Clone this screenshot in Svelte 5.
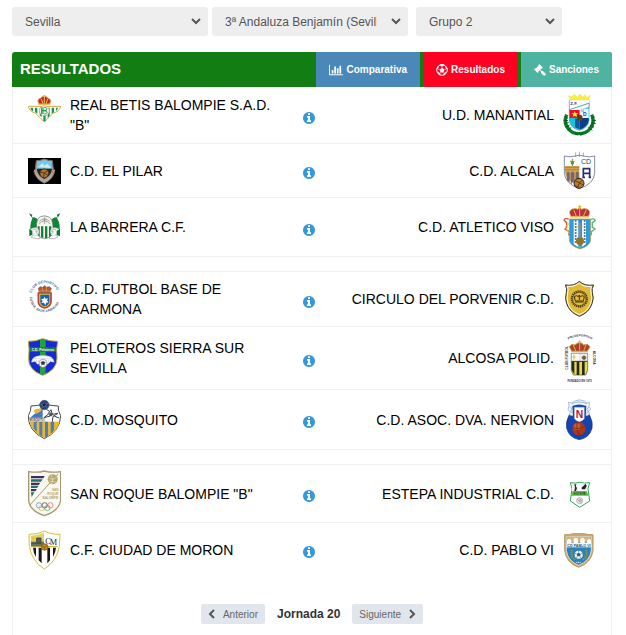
<script>
  const filters = [
    { id: 'provincia', label: 'Provincia', value: 'Sevilla', width: 196 },
    { id: 'categoria', label: 'Categoría', value: '3ª Andaluza Benjamín (Sevilla)', width: 196 },
    { id: 'grupo', label: 'Grupo', value: 'Grupo 2', width: 146 },
  ];

  const groups = [
    [
      { home: 'REAL BETIS BALOMPIE S.A.D. "B"', away: 'U.D. MANANTIAL', homeLogo: betis, awayLogo: manantial },
      { home: 'C.D. EL PILAR', away: 'C.D. ALCALA', homeLogo: pilar, awayLogo: alcala },
      { home: 'LA BARRERA C.F.', away: 'C.D. ATLETICO VISO', homeLogo: barrera, awayLogo: viso },
    ],
    [
      { home: 'C.D. FUTBOL BASE DE CARMONA', away: 'CIRCULO DEL PORVENIR C.D.', homeLogo: carmona, awayLogo: porvenir },
      { home: 'PELOTEROS SIERRA SUR SEVILLA', away: 'ALCOSA POLID.', homeLogo: peloteros, awayLogo: alcosa },
      { home: 'C.D. MOSQUITO', away: 'C.D. ASOC. DVA. NERVION', homeLogo: mosquito, awayLogo: nervion },
    ],
    [
      { home: 'SAN ROQUE BALOMPIE "B"', away: 'ESTEPA INDUSTRIAL C.D.', homeLogo: sanroque, awayLogo: estepa },
      { home: 'C.F. CIUDAD DE MORON', away: 'C.D. PABLO VI', homeLogo: moron, awayLogo: pablo },
    ],
  ];
</script>

{#snippet betis()}
  <svg class="logo" viewBox="54 18 99 138" aria-hidden="true">
    <path d="M55 61h97q-4 16-22 20l-27 27-27-27q-18-4-21-20z" fill="#fff" stroke="#d8a548" stroke-width="3" />
    <path d="M62 65h7v12l-7-7zM75 65h7v18l-7-5zM89 65h6v29l-6-6zM100 62h7v42l-4 3-3-3zM113 65h6v25l-6 6zM125 65h7v14l-7 4zM138 65h7l-7 11z" fill="#189a50" />
    <circle cx="103" cy="74" r="15" fill="#eef3df" stroke="#c7a050" stroke-width="2" />
    <path d="M95 64v20m4-20v20m-4-10h15m-7-10c10 0 9 9 0 10c11 0 10 10 0 10" fill="none" stroke="#16954b" stroke-width="3" />
    <path d="M87 54q-8-14 4-17 4-6 12-6 7 0 11 6 13 3 5 17z" fill="#c32431" stroke="#d9a642" stroke-width="3" />
    <path d="M85 55h36M94 39l5 14m14-14-5 14M103 28v24M99 29h8" stroke="#e7bc52" stroke-width="3" />
  </svg>
{/snippet}

{#snippet manantial()}
  <svg class="logo" viewBox="189 18 99 138" aria-hidden="true">
    <path d="M200 86q-11 25 6 43 10 14 31 14 21 0 33-15 16-17 5-42" fill="none" stroke="#087b27" stroke-width="10" />
    <path d="M194 92l10 5m-13 6 13 1m-12 8 14-2m-9 14 12-7m-6 16 11-9M284 92l-10 5m14 6-13 1m12 9-14-3m9 14-12-7m7 16-12-9M226 139l6 9m16-10-6 11" stroke="#075d1e" stroke-width="3" />
    <path d="M208 43h59v60q-3 23-29 30-27-7-30-30z" fill="#1adbea" stroke="#607e9d" stroke-width="2" />
    <path d="M209 43l58-4v11l-58 20z" fill="#fff" /><path d="M209 71l58-19v12l-27 9-30 1z" fill="#f7f7ff" stroke="#333" />
    <path d="M209 72h30v24h-30z" fill="#e51319" /><path d="M239 68h27v28h-27z" fill="#e8f6ff" />
    <path d="M239 96h27v8q-4 18-27 27z" fill="#0b3d89" /><path d="M209 96h30v35q-27-8-30-27z" fill="#10c6dc" /><path d="M225 98h14v32l-14-6z" fill="#1358a4" />
    <path d="M224 76l3 6h7l-5 4 2 7-7-4-6 4 2-7-5-4h7z" fill="#ffec3b" />
    <circle cx="239" cy="95" r="9" fill="#6b4422" /><path d="M233 91l12 8m-8-12v16" stroke="#24170d" />
    <path d="M205 29l7 13h54l5-15-10 8-6-9-7 8-8-10-8 10-9-9-7 8z" fill="#ffef32" stroke="#ebc831" />
    <text x="211" y="58" class="blue heavy" font-size="13">Z.F.</text><text x="242" y="79" class="cyan heavy" font-size="13">U</text><text x="249" y="90" class="blue heavy" font-size="15">D</text>
  </svg>
{/snippet}

{#snippet pilar()}
  <svg class="logo" viewBox="54 189 99 129" aria-hidden="true">
    <path d="M54 216h99v78H54z" fill="#030303" />
    <path d="M79 224q12 0 24-5 12 5 24 5l3 25q0 30-27 43-27-13-27-43z" fill="#a4a19d" stroke="#776e6b" stroke-width="3" />
    <path d="M82 226q11 0 21-4 11 4 21 4v22H80z" fill="#6ec9ee" /><path d="M84 244l14-13 5 8 10-6 11 13z" fill="#d6e8e4" />
    <path d="M80 248h46q-2 22-23 31-20-9-23-31z" fill="#27231d" />
    <circle cx="103" cy="262" r="13" fill="#b0742d" stroke="#3a291b" stroke-width="2" /><path d="M91 258l12 3 10-7m-10 7-3 13m3-13 11 7" fill="none" stroke="#35230f" stroke-width="2" />
    <path d="M74 251q2 25 29 37 27-11 30-37" fill="none" stroke="#b2abb1" stroke-width="5" />
    <path d="M71 255q8 29 32 35 24-7 31-35" fill="none" stroke="#816a28" stroke-width="2" />
  </svg>
{/snippet}

{#snippet alcala()}
  <svg class="logo" viewBox="189 189 99 129" aria-hidden="true">
    <path d="M193 210q18 5 33 0 12-5 24 0 18 5 34 0v52q-2 31-46 46-42-15-45-46z" fill="#fff" stroke="#425680" stroke-width="2" />
    <path d="M227 199v14m11-16v16m12-13v12" stroke="#74819c" stroke-width="2" />
    <path d="M194 240h44v58q-42-12-44-46z" fill="#d1a451" />
    <path d="M194 244h44M194 251h44" stroke="#977336" stroke-width="2" />
    <path d="M201 283v-22q4-8 7 0v28m5 5v-33q5-8 9 0v23m6 0v-23q4-8 8 0v24" fill="#6c6395" stroke="#8c6d41" stroke-width="2" />
    <path d="M217 218v22m-7-14h14m-10 6h7" stroke="#9e8c2d" stroke-width="3" /><circle cx="217" cy="231" r="5" fill="#4c9550" />
    <text x="243" y="234" class="blue" font-size="21">CD</text>
    <path d="M250 274v-26h19v26m-19-12h19m-22 12h8m11 0h7" fill="none" stroke="#292f68" stroke-width="5" />
    <circle cx="237" cy="292" r="15" fill="#b47d2a" stroke="#30251b" stroke-width="3" /><path d="M225 284l13 6 11-8m-11 8-4 14m4-14 13 8M225 299l10 4" fill="none" stroke="#3b2715" stroke-width="2" />
  </svg>
{/snippet}

{#snippet barrera()}
  <svg class="logo" viewBox="54 9 99 144" aria-hidden="true">
    <path d="M60 44l32 38M148 44l-31 38" stroke="#777" stroke-width="2" />
    <path d="M57 40l10 4-2 8zM151 40l-11 4 4 8z" fill="#14722d" />
    <path d="M68 52q14 0 21 16l2 21q-14-11-29-2l2 18q-6-20-1-38zM140 52q-14 0-20 16l-1 21q13-11 28-2l-1 18q6-20 1-38z" fill="#0b8737" />
    <path d="M79 84q0-28 12-34 13-6 26 1 11 6 12 31v15q-4 16-25 19-21-3-25-19z" fill="#f3f5ef" stroke="#6d6d6d" stroke-width="2" />
    <path d="M86 72q17-18 35 0M88 64q15-15 31 0M104 50v22m-6-12h12" stroke="#888" fill="none" stroke-width="2" />
    <path d="M83 79h6v31l-6-5zM93 79h7v35l-7-2zM105 79h7v36h-7zM117 79h7v28l-7 5z" fill="#16803b" />
    <circle cx="75" cy="95" r="12" fill="#f5f5f5" stroke="#aaa" /><path d="M68 90q8-7 15 3l-6 2 6 7m-12 2-8 8 16 4h11v-6" fill="none" stroke="#999" stroke-width="2" />
    <circle cx="133" cy="95" r="12" fill="#f5f5f5" stroke="#aaa" /><path d="M139 90q-8-7-15 3l6 2-6 7m13 3 7 7-14 4h-12v-6" fill="none" stroke="#999" stroke-width="2" />
    <path d="M58 86l9 7v11l-9 5zM150 86l-10 7v12l10 4z" fill="#087935" />
  </svg>
{/snippet}

{#snippet viso()}
  <svg class="logo" viewBox="189 9 99 144" aria-hidden="true">
    <path d="M208 57h64v65q-3 16-32 25-29-9-32-25z" fill="#2b9ddd" stroke="#c49a34" stroke-width="2" />
    <path d="M221 61h37v70q-6 7-18 11-14-4-19-11z" fill="#f4f8f8" /><path d="M235 59h11v81h-11z" fill="#2492cf" />
    <path d="M227 61v69m27-69v69" stroke="#384d62" stroke-width="5" stroke-dasharray="4 5" />
    <circle cx="240" cy="123" r="12" fill="#8d7726" /><path d="M240 68v46m-7-34h14" stroke="#8e9491" stroke-width="4" />
    <path d="M206 57q-12-4-14 4l8 7v13l-5 6 12 7v13" fill="none" stroke="#cc5e3c" stroke-width="4" /><path d="M208 70l-12 11 12 19" stroke="#e4bd48" fill="none" stroke-width="3" />
    <path d="M273 58q9-4 13 3l-9 7v14l8 5-11 8v11" fill="none" stroke="#54b67c" stroke-width="4" />
    <path d="M213 49q-10-16 4-22 9-4 17 1l5-8 5 8q9-5 17-1 14 6 4 22z" fill="#be303c" stroke="#d6a839" stroke-width="2" />
    <path d="M210 51h57M221 29l8 20m30-20-9 20M239 16v32m-5-29h10" stroke="#ddb549" stroke-width="3" />
  </svg>
{/snippet}

{#snippet carmona()}
  <svg class="logo" viewBox="54 228 99 132" aria-hidden="true">
    <defs><path id="carmona-top" d="M65 276a41 41 0 0 1 79 0" /><path id="carmona-base" d="M59 288a45 45 0 0 0 91 0" /></defs>
    <text font-size="11" class="teal heavy"><textPath href="#carmona-top">CLUB DEPORTIVO</textPath></text>
    <text font-size="10" class="wine heavy"><textPath href="#carmona-base">FUTBOL BASE CARMONA</textPath></text>
    <path d="M85 276h38v27q-1 14-19 18-18-4-19-18z" fill="#d4c94b" stroke="#c43d36" stroke-width="5" />
    <path d="M91 281h27v21q-1 10-14 14-13-4-13-14z" fill="#1764ac" />
    <path d="M104 287l3 7 7-2-3 7 5 5-7 1-3 8-4-8-8 1 4-6-5-6 8-1z" fill="#fff" />
    <path d="M88 274l-3-12 6-5 7 2 6-5 6 5 8-2 6 5-4 12z" fill="#b5553c" stroke="#7f5938" stroke-width="2" /><path d="M87 270h35M96 259l3 12m10-12v12" stroke="#dfae5b" stroke-width="2" />
  </svg>
{/snippet}

{#snippet porvenir()}
  <svg class="logo" viewBox="189 228 99 132" aria-hidden="true">
    <path d="M238 241q-15 15-42 11 7 12 3 23-5 18 1 33 8 25 38 38 30-12 38-38 7-17 1-33-3-12 4-23-27 4-43-11z" fill="#e3ba35" stroke="#29303a" stroke-width="3" />
    <path d="M238 246q-14 12-36 10 4 10 1 20-4 17 1 31 7 23 34 34 27-11 34-34 6-15 1-31-2-10 1-20-23 3-36-10z" fill="none" stroke="#fff" stroke-width="3" />
    <circle cx="238" cy="294" r="23" fill="none" stroke="#4d401f" stroke-width="6" stroke-dasharray="4 2" />
    <circle cx="238" cy="294" r="20" fill="none" stroke="#4b3b1a" stroke-width="2" />
    <path d="M226 300l-3-13q7-6 12 0l3-5 3 5q6-6 12 0l-3 13z" fill="#e3ba35" stroke="#40320d" stroke-width="3" /><path d="M226 303h25M238 282v15" stroke="#40320d" stroke-width="3" />
  </svg>
{/snippet}

{#snippet peloteros()}
  <svg class="logo" viewBox="54 18 99 156" aria-hidden="true">
    <path d="M55 46q22 0 43-8 22 8 45 8-5 22-2 50 0 36-43 52-44-16-42-52 3-28-1-50z" fill="#162bd4" stroke="#b8ad3b" stroke-width="3" />
    <path d="M90 42l8-3 9 3v101l-9 4-8-4z" fill="#21a43c" />
    <path d="M60 64h78v14H60z" fill="#187a48" /><text x="99" y="75" font-size="10" text-anchor="middle" class="white heavy">C.D. Peloteros</text>
    <path d="M64 109q2-15 15-18 20-6 39 0 13 4 15 18l-12-2-8 8H82l-6-8z" fill="#f5f7fa" stroke="#888" />
    <path d="M68 98h61M72 105h52" stroke="#5c6e91" stroke-dasharray="3 3" />
    <circle cx="99" cy="112" r="12" fill="#fff" stroke="#858585" stroke-width="2" /><path d="M99 105l6 4-2 7h-8l-2-7zM88 112l5-3m12 0 6 3m-7 5 3 5m-12-5-4 5" fill="#333" stroke="#555" />
  </svg>
{/snippet}

{#snippet alcosa()}
  <svg class="logo" viewBox="189 18 99 156" aria-hidden="true">
    <defs><path id="alcosa-top" d="M199 44q40-26 82 0" /></defs>
    <text font-size="9" class="dark heavy"><textPath href="#alcosa-top" startOffset="50%" text-anchor="middle">POLIDEPORTIVO</textPath></text>
    <text transform="translate(203 131) rotate(-90)" font-size="10" class="dark heavy">CLUB FUTBOL</text><text transform="translate(279 74) rotate(90)" font-size="10" class="dark heavy">ALCOSA</text>
    <text x="239" y="167" text-anchor="middle" font-size="8" class="dark heavy">FUNDADO EN 1973</text>
    <path d="M214 82h49v51l-6 14h-37l-6-14z" fill="#e9dc40" stroke="#484848" stroke-width="2" />
    <path d="M215 83h23v23h-23z" fill="#fff" /><path d="M238 83h24v23h-24z" fill="#e8edee" />
    <path d="M215 106h8v39l-8-13zM230 106h8v41h-8zM246 106h8v41h-8z" fill="#272727" /><path d="M215 106h47" stroke="#333" stroke-width="3" />
    <path d="M222 86v15m-4-8h9" stroke="#d4b947" stroke-width="3" /><circle cx="252" cy="95" r="6" fill="#614a27" /><path d="M244 95h16m-8-8v16" stroke="#8b7248" stroke-width="2" />
    <path d="M216 77l-8-15 8-7 10 2q4-7 12-7t13 7l11-2 8 7-9 15z" fill="#ae3e28" stroke="#c29d3a" stroke-width="3" />
    <path d="M214 76h49M220 57l7 18m31-18-7 18M239 43v31m-5-26h10" stroke="#d3b254" stroke-width="3" />
  </svg>
{/snippet}

{#snippet mosquito()}
  <svg class="logo" viewBox="54 207 99 147" aria-hidden="true">
    <path d="M63 240q15 0 40-6 25 6 42 6-2 14 7 29-1 46-49 69-49-23-48-69 9-15 8-29z" fill="#fff" stroke="#434a51" stroke-width="3" />
    <path d="M59 287h90q-6 31-46 49-39-18-44-49z" fill="#edb72c" />
    <path d="M71 287h9v32l-9-12zM88 287h9v45l-9-6zM105 287h9v43l-9 5zM122 287h10v26l-10 11z" fill="#4a7fc6" />
    <path d="M60 275l38-31v31z" fill="#4677c0" /><path d="M70 256q5-10 16-7l10-5-3 12-14 7z" fill="#e6b941" />
    <path d="M57 276h47v11H57z" fill="#fff" stroke="#555" /><text x="80" y="285" text-anchor="middle" font-size="8" class="dark heavy">MOSQUITO</text>
    <path d="M114 263l9-12 4 14 17-3-15 9-2 16m-6-17-19 5 16-13m14 8 15 6m-30-21-8-5" fill="none" stroke="#39404a" stroke-width="3" /><path d="M119 258l10 5-3 8-9-2z" fill="#4b555e" />
    <circle cx="103" cy="237" r="14" fill="#263e70" stroke="#43516f" stroke-width="2" /><path d="M103 230l6 5-3 7h-7l-3-7zM91 237l5-3m13 0 7-3m-8 11 4 6m-14-6-4 5" fill="#18233d" stroke="#6681b2" stroke-width="2" />
  </svg>
{/snippet}

{#snippet nervion()}
  <svg class="logo" viewBox="189 207 99 147" aria-hidden="true">
    <path d="M208 266q-12 22-8 41 8 29 38 34 30-5 38-34 4-19-8-41z" fill="#1543af" stroke="#0a3280" stroke-width="2" />
    <path d="M207 238l-2-9 11 2 8-6q15-7 29 0l6 5 10-1-2 12 5 8-7 7 4 9-8 4h-45l-9-3 4-7-7-8z" fill="#eef3f9" stroke="#87a7c6" stroke-width="2" />
    <path d="M217 240q20-9 42 0l-2 32h-38z" fill="#1c49a8" />
    <path d="M215 233q22-10 46 0M210 242l6 7-4 8 7 6m48-20-7 7 5 8-7 6" fill="none" stroke="#7d9bbd" stroke-width="2" />
    <path d="M223 244h30v33q-4 9-15 10-11-1-15-10z" fill="#fff" stroke="#86a3c2" />
    <text x="227" y="276" class="red heavy" font-size="31">N</text>
    <circle cx="237" cy="308" r="20" fill="#a9371b" /><circle cx="231" cy="302" r="10" fill="#c85a2f" /><path d="M219 305q18 7 37-5m-25-11q-4 22 8 38" fill="none" stroke="#76260f" stroke-width="2" />
  </svg>
{/snippet}

{#snippet sanroque()}
  <svg class="logo" viewBox="54 72 99 141" aria-hidden="true">
    <path d="M56 77q28 4 47-2 21 6 49 2v86q-5 32-49 46-43-14-47-46z" fill="#f8f7f1" stroke="#a3986e" stroke-width="4" />
    <path d="M63 90h41l-4 7H63z" fill="#37305f" /><path d="M63 100h35l-5 7H63zM63 119h23l-5 7H63z" fill="#276e63" /><path d="M63 110h28l-5 7H63zM63 129h18l-5 7H63z" fill="#3d315f" /><path d="M63 139h10l-8 14z" fill="#246a60" />
    <path d="M144 84L59 178" stroke="#ac9b68" stroke-width="3" /><circle cx="128" cy="100" r="15" fill="#b6a66c" /><path d="M116 95q14 11 24-3m-17-6q10 15 2 28m-8-9 20 3" fill="none" stroke="#eee6bd" stroke-width="2" />
    <g text-anchor="end" font-size="9"><text x="145" y="136" class="gold heavy">SAN</text><text x="145" y="147" class="gold heavy">ROQUE</text><text x="145" y="158" class="gold heavy">BALOMPIE</text></g>
    <g fill="none" stroke-width="2"><circle cx="87" cy="178" r="8" stroke="#4689b0" /><circle cx="104" cy="178" r="8" stroke="#333" /><circle cx="121" cy="178" r="8" stroke="#dc6360" /><circle cx="95" cy="186" r="8" stroke="#d4b44f" /><circle cx="112" cy="186" r="8" stroke="#4b9a69" /></g>
  </svg>
{/snippet}

{#snippet estepa()}
  <svg class="logo" viewBox="189 57 99 141" aria-hidden="true">
    <path d="M211 95q14 3 28-1 15 4 30 1l-5 18 5 37-30 19-28-19 5-37z" fill="#fff" stroke="#33a660" stroke-width="3" />
    <path d="M217 100h18v21h-20zM243 98h18v21h-18z" fill="#f2f2f2" /><path d="M223 100h6l-2 6 4 5-3 9h-5l2-10zM244 111l13-13 3 7-5 10h-8z" fill="#222" />
    <path d="M218 120h42l6 14h-53z" fill="#54bd3c" /><text x="239" y="131" text-anchor="middle" font-size="9" class="dark">ESTEPA</text>
    <circle cx="239" cy="149" r="9" fill="#f4f4f4" stroke="#909090" stroke-width="2" /><path d="M235 146l5-3 5 4-2 6h-6zM235 146l-5-2m13 9 3 4" fill="#bbb" stroke="#888" />
  </svg>
{/snippet}

{#snippet moron()}
  <svg class="logo" viewBox="54 246 99 129" aria-hidden="true">
    <path d="M57 265q26 1 46-10 20 11 47 10l-2 36q-7 44-45 68-38-24-45-68z" fill="#fff" stroke="#d9bd31" stroke-width="3" />
    <path d="M62 269q19 0 40-9v42H63z" fill="#ddd273" /><path d="M63 287h39v15H63z" fill="#68725c" /><path d="M80 276h13v14H80zM65 292h28" fill="#56604c" stroke="#46503c" stroke-width="3" /><path d="M71 269l2 5 5 1-4 3 2 5-5-3-5 3 1-5-3-4h5z" fill="#edc421" />
    <text x="106" y="293" font-size="25" class="serif">C</text><text x="119" y="297" font-size="25" class="serif">M</text>
    <path d="M69 305h9v28q-8-13-9-28zM86 305h9v47l-9-9zM112 305h8v38l-8 9zM129 305h9q-1 14-9 28z" fill="#17181a" />
    <path d="M63 302h80" stroke="#b9a13d" stroke-width="3" /><circle cx="104" cy="303" r="10" fill="#bd871f" stroke="#715321" stroke-width="2" /><path d="M97 300l7 4 7-5m-7 5-2 7" stroke="#7c571a" fill="none" stroke-width="2" />
  </svg>
{/snippet}

{#snippet pablo()}
  <svg class="logo" viewBox="189 231 99 129" aria-hidden="true">
    <path d="M194 251q17 1 24-3h36q8 4 25 3v48q-5 37-43 50-37-13-42-50z" fill="#cfa76c" stroke="#bd9864" stroke-width="3" />
    <path d="M199 257h75v41q-4 32-38 45-33-13-37-45z" fill="#2e80b5" stroke="#fff" stroke-width="2" />
    <path d="M200 257h74v18h-74z" fill="#d6b27c" /><path d="M201 276v-8q7-8 13 0v8m7 0v-12q7-8 13 0v12m7 0v-12q7-8 13 0v12m7 0v-8q6-8 12 0v8" fill="#fff" />
    <path d="M200 276h74v13h-74z" fill="#eef5f8" /><text x="237" y="287" text-anchor="middle" font-size="11" class="navy heavy">CD PABLO VI</text>
    <path d="M216 297q-6 20 11 30m31-30q7 20-11 30" fill="none" stroke="#76986d" stroke-width="6" stroke-dasharray="4 2" />
    <circle cx="236" cy="311" r="12" fill="#f6f6ef" /><path d="M236 305l6 4-2 7h-8l-2-7z" fill="#2d6384" /><path d="M225 307l5 2m12 0 6-2m-8 9 3 6m-11-6-3 6m7-17v-6" stroke="#457084" stroke-width="2" /><path d="M229 334h15" stroke="#fff" stroke-width="3" stroke-dasharray="3 2" />
  </svg>
{/snippet}

<div class="page">
  <form class="filters">
    {#each filters as f}
      <label class="filter" for={f.id} style="width: {f.width}px">
        <select id={f.id} aria-label={f.label}><option>{f.value}</option></select>
        <svg class="chevron" viewBox="0 0 12 8" aria-hidden="true"><path d="M2 1l4 4 4-4" /></svg>
      </label>
    {/each}
  </form>

  <main class="panel">
    <header>
      <h1>RESULTADOS</h1>
      <nav>
        <a href="#comparativa" class="comparativa">
          <svg width="14" height="12" viewBox="0 0 2048 1792" aria-hidden="true"><path d="M640 896v512h-256v-512h256zm384-512v1024h-256v-1024h256zm1024 1152v128h-2048v-1536h128v1408h1920zm-640-896v768h-256v-768h256zm384-384v1152h-256v-1152h256z" /></svg>
          Comparativa
        </a>
        <a href="#resultados" class="resultados">
          <svg width="12" height="12" viewBox="0 0 24 24" aria-hidden="true"><circle cx="12" cy="12" r="10.6" fill="none" stroke="#fff" stroke-width="2" /><path d="M12 7.5l5 3.6-2 5.9H9l-2-5.9zM7 2.5l5 2.7 5-2.7v-1L12 0 7 1.500zM1 9l3 1 2-5-2-1zM23 9l-3 1-2-5 2-1zM4 19l1-4 4 5-1 3zM20 19l-1-4-4 5 1 3z" /><path d="M12 8V4M7 11l-4-1m14 1 4-1M9 17l-2 3m8-3 2 3" fill="none" stroke="#fff" /></svg>
          Resultados
        </a>
        <a href="#sanciones" class="sanciones">
          <svg width="12" height="12" viewBox="0 0 1792 1792" aria-hidden="true"><path d="M1771 1536q0 53-37 90l-107 108q-39 37-91 37-53 0-90-37l-363-364q-38-36-38-90 0-53 43-96l-256-256-126 126q-14 14-34 14t-34-14q2 2 12.500 12t12.500 13 10 11.500 10 13.500 6 13.500 5.500 16.500 1.500 18q0 38-28 68-3 3-16.500 18t-19 20.500-18.500 16.500-22 15.500-22 9-26 4.500q-40 0-68-28l-408-408q-28-28-28-68 0-13 4.500-26t9-22 15.500-22 16.500-18.500 20.500-19 18-16.500q30-28 68-28 10 0 18 1.500t16.500 5.500 13.500 6 13.500 10 11.500 10 13 12.500 12 12.500q-14-14-14-34t14-34l348-348q14-14 34-14t34 14q-2-2-12.500-12t-12.500-13-10-11.500-10-13.500-6-13.500-5.500-16.500-1.500-18q0-38 28-68 3-3 16.500-18t19-20.500 18.500-16.500 22-15.500 22-9 26-4.500q40 0 68 28l408 408q28 28 28 68 0 13-4.500 26t-9 22-15.500 22-16.500 18.500-20.500 19-18 16.500q-30 28-68 28-10 0-18-1.500t-16.500-5.500-13.500-6-13.500-10-11.500-10-13-12.500-12-12.500q14 14 14 34t-14 34l-126 126 256 256q43-43 96-43 52 0 91 37l363 363q37 39 37 91z" /></svg>
          Sanciones
        </a>
      </nav>
    </header>

    <div class="body">
      {#each groups as group, g}
        <ul class:spaced={g > 0}>
          {#each group as m}
            <li>
              {@render m.homeLogo()}
              <span class="name">{m.home}</span>
              <a class="info" href="#partido" aria-label="Información del partido">
                <svg width="12" height="12" viewBox="0 128 1536 1536" aria-hidden="true"><path d="M1024 1376v-160q0-14-9-23t-23-9h-96v-512q0-14-9-23t-23-9h-320q-14 0-23 9t-9 23v160q0 14 9 23t23 9h96v320h-96q-14 0-23 9t-9 23v160q0 14 9 23t23 9h448q14 0 23-9t9-23zm-128-896v-160q0-14-9-23t-23-9h-192q-14 0-23 9t-9 23v160q0 14 9 23t23 9h192q14 0 23-9t9-23zm640 416q0 209-103 385.500t-279.500 279.500-385.500 103-385.500-103-279.500-279.500-103-385.500 103-385.500 279.500-279.500 385.500-103 385.500 103 279.500 279.500 103 385.500z" /></svg>
              </a>
              <span class="name away">{m.away}</span>
              {@render m.awayLogo()}
            </li>
          {/each}
        </ul>
      {/each}

      <footer>
        <button type="button">
          <svg width="7" height="10" viewBox="0 0 7 10" aria-hidden="true"><path d="M6 1L2 5l4 4" /></svg>
          Anterior
        </button>
        <strong>Jornada 20</strong>
        <button type="button">
          Siguiente
          <svg width="7" height="10" viewBox="0 0 7 10" aria-hidden="true"><path d="M1 1l4 4-4 4" /></svg>
        </button>
      </footer>
    </div>
  </main>
</div>

<style>
  :global(body) { background: #fff; }
  .page { padding: 7px 14px 0 12px; font-family: "Liberation Sans", Arial, sans-serif; color: #000; }

  .filters { display: flex; gap: 4px; margin-bottom: 16px; }
  .filter { position: relative; display: block; height: 29px; }
  .filter:last-child { margin-left: 4px; }
  select { appearance: none; box-sizing: border-box; width: 100%; height: 29px; border: 0; border-radius: 3px; padding: 0 31px 0 13px; background: #eee; color: #555; font: 12px "Liberation Sans", Arial, sans-serif; }
  .chevron { position: absolute; right: 6px; top: 11px; width: 12px; height: 8px; pointer-events: none; fill: none; stroke: #555; stroke-width: 2; }

  header { display: flex; height: 35px; overflow: hidden; border-radius: 3px 3px 0 0; background: #127d12; }
  h1 { flex: 1; margin: 0; padding-left: 8px; font-size: 15px; line-height: 34px; color: #fff; }
  nav { display: flex; gap: 3px; }
  nav a { display: flex; align-items: center; gap: 3px; padding: 0 13px; color: #fff; font-size: 10px; font-weight: bold; text-decoration: none; }
  nav svg { fill: #fff; }
  .comparativa { background: #4b88ba; }
  .resultados { background: #ff0022; }
  .sanciones { background: #4fb3a2; }

  .body { border: solid #f0f0f0; border-width: 0 1px; }
  ul { margin: 0; padding: 0; list-style: none; }
  .spaced { margin-top: 14px; border-top: 1px solid #f0f0f0; }
  li { display: grid; grid-template-columns: 33px 224fr 12px 230fr 33px; column-gap: 9px; align-items: center; padding: 5px 15px; border-bottom: 1px solid #f0f0f0; }
  ul:nth-of-type(3) li:last-child { border-bottom: 0; }
  .logo { display: block; width: 100%; }
  .name { padding-right: 10px; font-size: 14px; line-height: 20px; }
  .away { padding-right: 0; text-align: right; }
  .info { display: block; padding-top: 5px; }
  .info svg { display: block; fill: #3598dc; }

  text { font-family: "Liberation Sans", Arial, sans-serif; }
  .heavy { font-weight: bold; }
  .blue { fill: #26428a; }
  .cyan { fill: #19bddc; }
  .teal { fill: #397990; }
  .wine { fill: #56637e; }
  .white { fill: #fff; }
  .dark { fill: #333; }
  .red { fill: #b71b3e; }
  .gold { fill: #b4a46d; }
  .navy { fill: #28618b; }
  .serif { font-family: "Liberation Serif", serif; fill: #222; }

  footer { display: flex; justify-content: center; align-items: center; gap: 12px; padding: 28px 0 12px; }
  footer strong { font-size: 12px; line-height: 20px; color: #333; }
  button { display: flex; align-items: center; gap: 8px; height: 20px; border: 0; border-radius: 2px; padding: 0 7px; background: #e1e5ec; color: #666; font: 10px "Liberation Sans", Arial, sans-serif; }
  button svg { fill: none; stroke: #555; stroke-width: 2; }
</style>
